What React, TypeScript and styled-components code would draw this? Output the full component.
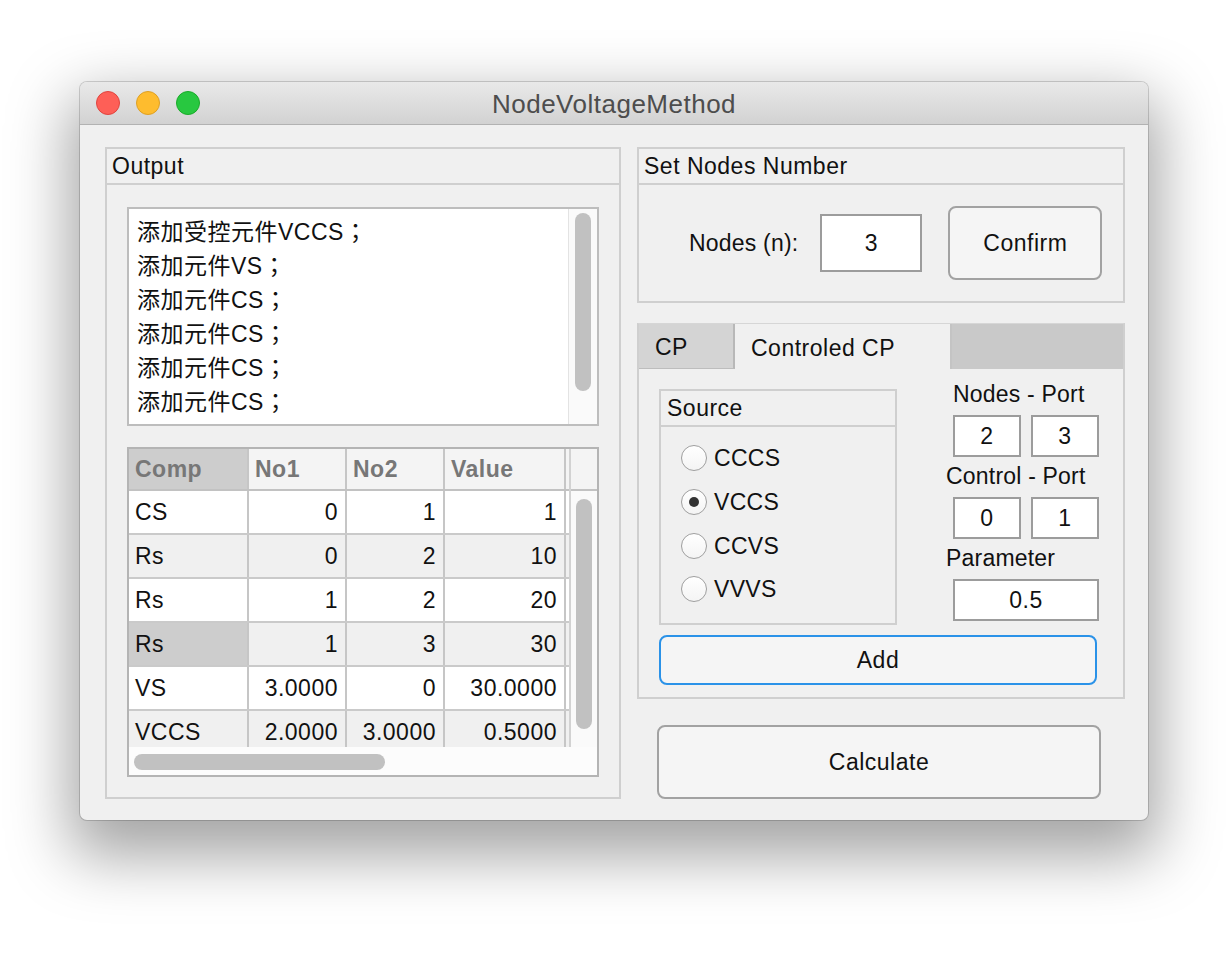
import React from "react";
import styled, { createGlobalStyle } from "styled-components";

const FONT = `"Liberation Sans", "Noto Sans CJK TC", Arial, sans-serif`;

const GlobalStyle = createGlobalStyle`
  html, body { margin: 0; padding: 0; background: #ffffff; }
  body { font-family: ${FONT}; color: #111; }
  *, *::before, *::after { box-sizing: border-box; }
`;

const Page = styled.div`
  width: 1230px;
  height: 956px;
  padding: 82px 0 0 80px;
`;

const Window = styled.div`
  width: 1068px;
  height: 738px;
  border-radius: 7px;
  overflow: hidden;
  background: #f0f0f0;
  box-shadow: 0 0 0 1px rgba(0, 0, 0, 0.16), 0 26px 62px 10px rgba(0, 0, 0, 0.36);
  display: flex;
  flex-direction: column;
`;

const TitleBar = styled.div`
  height: 43px;
  flex: none;
  display: grid;
  grid-template-columns: 1fr auto 1fr;
  align-items: center;
  background: linear-gradient(#e9e9e9, #d2d2d2);
  border-bottom: 1px solid #b2b2b2;
`;

const Lights = styled.div`
  display: flex;
  gap: 16px;
  padding-left: 16px;
`;

const Light = styled.span<{ $bg: string; $edge: string }>`
  width: 24px;
  height: 24px;
  border-radius: 50%;
  background: ${(p) => p.$bg};
  border: 1px solid ${(p) => p.$edge};
`;

const Title = styled.div`
  font-size: 26px;
  letter-spacing: 0.5px;
  color: #4d4d4d;
  padding-top: 3px;
`;

const Body = styled.div`
  flex: 1;
  display: flex;
  gap: 16px;
  padding: 22px 0 0 25px;
`;

const Panel = styled.section<{ $w: number; $h: number }>`
  width: ${(p) => p.$w}px;
  height: ${(p) => p.$h}px;
  flex: none;
  border: 2px solid #cfcfcf;
  display: flex;
  flex-direction: column;
`;

const PanelHeader = styled.div`
  height: 36px;
  flex: none;
  display: flex;
  align-items: center;
  padding-left: 5px;
  border-bottom: 2px solid #cfcfcf;
  font-size: 23px;
  letter-spacing: 0.5px;
`;

const OutputContent = styled.div`
  display: flex;
  flex-direction: column;
  gap: 21px;
  padding: 22px 0 0 20px;
`;

const TextBox = styled.div`
  width: 472px;
  height: 219px;
  border: 2px solid #bdbdbd;
  background: #fff;
  display: flex;
`;

const Lines = styled.div`
  flex: 1;
  padding: 6px 0 0 8px;
  font-size: 23px;
  letter-spacing: 0.5px;
  line-height: 34px;
  overflow: hidden;
`;

const VTrack = styled.div`
  width: 29px;
  flex: none;
  background: #fafafa;
  border-left: 1px solid #e3e3e3;
  padding: 4px 0 0 6px;
`;

const Thumb = styled.div<{ $len: number }>`
  width: 16px;
  height: ${(p) => p.$len}px;
  border-radius: 8px;
  background: #c1c1c1;
`;

const TableFrame = styled.div`
  width: 472px;
  height: 330px;
  border: 2px solid #b4b4b4;
  background: #fff;
  display: flex;
  flex-direction: column;
`;

const TableTop = styled.div`
  height: 298px;
  display: flex;
`;

const DataArea = styled.div`
  width: 440px;
  flex: none;
  overflow: hidden;
`;

const Row = styled.div<{ $head?: boolean; $alt?: boolean }>`
  display: grid;
  grid-template-columns: 120px 98px 98px 121px 3px;
  height: ${(p) => (p.$head ? 42 : 44)}px;
  border-bottom: 2px solid ${(p) => (p.$head ? "#c2c2c2" : "#cacaca")};
  background: ${(p) => (p.$head ? "#f4f4f4" : p.$alt ? "#f0f0f0" : "#ffffff")};
`;

const Cell = styled.div<{ $num?: boolean; $head?: boolean; $sel?: boolean; $last?: boolean }>`
  display: flex;
  align-items: center;
  justify-content: ${(p) => (p.$num ? "flex-end" : "flex-start")};
  padding: ${(p) => (p.$num ? "0 7px 0 0" : "0 0 0 6px")};
  border-right: ${(p) => (p.$last ? "none" : "2px solid #c6c6c6")};
  background: ${(p) => (p.$sel ? "#cdcdcd" : "transparent")};
  font-size: 23px;
  letter-spacing: 0.5px;
  font-weight: ${(p) => (p.$head ? 700 : 400)};
  color: ${(p) => (p.$head ? "#777777" : "#111111")};
  white-space: nowrap;
`;

const TableVScroll = styled.div`
  width: 28px;
  flex: none;
  display: flex;
  flex-direction: column;
  border-left: 2px solid #d2d2d2;
  background: #fafafa;
`;

const ScrollHead = styled.div`
  height: 42px;
  flex: none;
  background: #f4f4f4;
  border-bottom: 2px solid #c2c2c2;
`;

const TableVThumbWrap = styled.div`
  padding: 8px 0 0 5px;
`;

const HTrack = styled.div`
  height: 28px;
  flex: none;
  padding: 7px 0 0 5px;
  background: #fcfcfc;
`;

const HThumb = styled.div`
  width: 251px;
  height: 16px;
  border-radius: 8px;
  background: #c1c1c1;
`;

const RightCol = styled.div`
  width: 488px;
  display: flex;
  flex-direction: column;
  gap: 20px;
`;

const NodesRow = styled.div`
  flex: 1;
  display: flex;
  align-items: center;
  padding-left: 50px;
`;

const FieldLabel = styled.span`
  font-size: 23px;
  letter-spacing: 0.2px;
  margin-right: 22px;
`;

const NumBox = styled.div<{ $w: number; $h: number }>`
  width: ${(p) => p.$w}px;
  height: ${(p) => p.$h}px;
  flex: none;
  border: 2px solid #9c9c9c;
  background: #fff;
  display: flex;
  align-items: center;
  justify-content: center;
  font-size: 23px;
  letter-spacing: 0.5px;
`;

const Button = styled.button<{ $w: number; $h: number; $focus?: boolean }>`
  width: ${(p) => p.$w}px;
  height: ${(p) => p.$h}px;
  flex: none;
  border: 2px solid ${(p) => (p.$focus ? "#2a92e8" : "#a2a2a2")};
  border-radius: 8px;
  background: #f5f5f5;
  font-family: ${FONT};
  font-size: 23px;
  letter-spacing: 0.5px;
  color: #111;
  padding: 0;
`;

const ConfirmButton = styled(Button)`
  margin-left: 26px;
`;

const TabPanel = styled.section`
  width: 488px;
  height: 376px;
  border: 2px solid #cfcfcf;
  border-top: 1px solid #d6d6d6;
  display: flex;
  flex-direction: column;
`;

const TabBar = styled.div`
  height: 45px;
  flex: none;
  display: flex;
  background: #c9c9c9;
`;

const Tab = styled.div<{ $active?: boolean; $w: number }>`
  width: ${(p) => p.$w}px;
  display: flex;
  align-items: center;
  padding: 3px 0 0 16px;
  font-size: 23px;
  letter-spacing: 0.5px;
  background: ${(p) => (p.$active ? "#f0f0f0" : "#d4d4d4")};
  border-right: 2px solid ${(p) => (p.$active ? "#c4c4c4" : "#b8b8b8")};
  border-bottom: ${(p) => (p.$active ? "none" : "1px solid #bdbdbd")};
`;

const TabBody = styled.div`
  flex: 1;
  display: flex;
  flex-direction: column;
  gap: 10px;
  padding: 20px 0 0 20px;
`;

const TopRow = styled.div`
  display: flex;
  align-items: flex-start;
`;

const SourceGroup = styled.div`
  width: 238px;
  height: 236px;
  border: 2px solid #cfcfcf;
  display: flex;
  flex-direction: column;
`;

const GroupHeader = styled(PanelHeader)`
  padding-left: 6px;
`;

const RadioList = styled.div`
  padding: 9px 0 0 20px;
  display: flex;
  flex-direction: column;
`;

const RadioItem = styled.div<{ $h: number }>`
  height: ${(p) => p.$h}px;
  display: flex;
  align-items: center;
  gap: 7px;
  font-size: 23px;
  letter-spacing: 0.3px;
`;

const RadioCircle = styled.span<{ $on?: boolean }>`
  width: 26px;
  height: 26px;
  border-radius: 50%;
  border: 1.5px solid #9f9f9f;
  background: linear-gradient(#ffffff, #f4f4f4);
  display: flex;
  align-items: center;
  justify-content: center;
  &::after {
    content: "";
    width: 10px;
    height: 10px;
    border-radius: 50%;
    background: ${(p) => (p.$on ? "#333333" : "transparent")};
  }
`;

const Fields = styled.div`
  width: 146px;
  margin: -9px 0 0 56px;
  display: flex;
  flex-direction: column;
`;

const SmallLabel = styled.div<{ $shift?: number }>`
  height: 28px;
  margin-left: ${(p) => p.$shift ?? 0}px;
  display: flex;
  align-items: center;
  font-size: 23px;
  letter-spacing: 0.2px;
  white-space: nowrap;
`;

const PairRow = styled.div<{ $mb: number }>`
  display: flex;
  gap: 10px;
  margin: 7px 0 ${(p) => p.$mb}px;
`;

const CalcButton = styled(Button)`
  margin: 6px 0 0 20px;
`;

const lines = ["添加受控元件VCCS；", "添加元件VS；", "添加元件CS；", "添加元件CS；", "添加元件CS；", "添加元件CS；"];

const rows: [string, string, string, string][] = [
  ["CS", "0", "1", "1"],
  ["Rs", "0", "2", "10"],
  ["Rs", "1", "2", "20"],
  ["Rs", "1", "3", "30"],
  ["VS", "3.0000", "0", "30.0000"],
  ["VCCS", "2.0000", "3.0000", "0.5000"],
];

const radios = [
  { label: "CCCS", on: false, h: 44 },
  { label: "VCCS", on: true, h: 44 },
  { label: "CCVS", on: false, h: 44 },
  { label: "VVVS", on: false, h: 42 },
];

export default function App() {
  return (
    <>
      <GlobalStyle />
      <Page>
        <Window>
          <TitleBar>
            <Lights>
              <Light $bg="#fe5f57" $edge="#e0443e" />
              <Light $bg="#febc2e" $edge="#dea024" />
              <Light $bg="#28c840" $edge="#1aab29" />
            </Lights>
            <Title>NodeVoltageMethod</Title>
            <div />
          </TitleBar>
          <Body>
            <Panel $w={516} $h={652}>
              <PanelHeader>Output</PanelHeader>
              <OutputContent>
                <TextBox>
                  <Lines>
                    {lines.map((l, i) => (
                      <div key={i}>{l}</div>
                    ))}
                  </Lines>
                  <VTrack>
                    <Thumb $len={178} />
                  </VTrack>
                </TextBox>
                <TableFrame>
                  <TableTop>
                    <DataArea>
                      <Row $head>
                        <Cell $head $sel>Comp</Cell>
                        <Cell $head>No1</Cell>
                        <Cell $head>No2</Cell>
                        <Cell $head>Value</Cell>
                        <Cell $last />
                      </Row>
                      {rows.map((r, i) => (
                        <Row key={i} $alt={i % 2 === 1}>
                          <Cell $sel={i === 3}>{r[0]}</Cell>
                          <Cell $num>{r[1]}</Cell>
                          <Cell $num>{r[2]}</Cell>
                          <Cell $num>{r[3]}</Cell>
                          <Cell $last />
                        </Row>
                      ))}
                    </DataArea>
                    <TableVScroll>
                      <ScrollHead />
                      <TableVThumbWrap>
                        <Thumb $len={230} />
                      </TableVThumbWrap>
                    </TableVScroll>
                  </TableTop>
                  <HTrack>
                    <HThumb />
                  </HTrack>
                </TableFrame>
              </OutputContent>
            </Panel>
            <RightCol>
              <Panel $w={488} $h={156}>
                <PanelHeader>Set Nodes Number</PanelHeader>
                <NodesRow>
                  <FieldLabel>Nodes (n):</FieldLabel>
                  <NumBox $w={102} $h={58}>3</NumBox>
                  <ConfirmButton $w={154} $h={74}>Confirm</ConfirmButton>
                </NodesRow>
              </Panel>
              <TabPanel>
                <TabBar>
                  <Tab $w={96}>CP</Tab>
                  <Tab $w={217} $active>Controled CP</Tab>
                </TabBar>
                <TabBody>
                  <TopRow>
                    <SourceGroup>
                      <GroupHeader>Source</GroupHeader>
                      <RadioList>
                        {radios.map((r) => (
                          <RadioItem key={r.label} $h={r.h}>
                            <RadioCircle $on={r.on} />
                            {r.label}
                          </RadioItem>
                        ))}
                      </RadioList>
                    </SourceGroup>
                    <Fields>
                      <SmallLabel>Nodes - Port</SmallLabel>
                      <PairRow $mb={5}>
                        <NumBox $w={68} $h={42}>2</NumBox>
                        <NumBox $w={68} $h={42}>3</NumBox>
                      </PairRow>
                      <SmallLabel $shift={-7}>Control - Port</SmallLabel>
                      <PairRow $mb={5}>
                        <NumBox $w={68} $h={42}>0</NumBox>
                        <NumBox $w={68} $h={42}>1</NumBox>
                      </PairRow>
                      <SmallLabel $shift={-7}>Parameter</SmallLabel>
                      <PairRow $mb={0}>
                        <NumBox $w={146} $h={42}>0.5</NumBox>
                      </PairRow>
                    </Fields>
                  </TopRow>
                  <Button $w={438} $h={50} $focus>Add</Button>
                </TabBody>
              </TabPanel>
              <CalcButton $w={444} $h={74}>Calculate</CalcButton>
            </RightCol>
          </Body>
        </Window>
      </Page>
    </>
  );
}
